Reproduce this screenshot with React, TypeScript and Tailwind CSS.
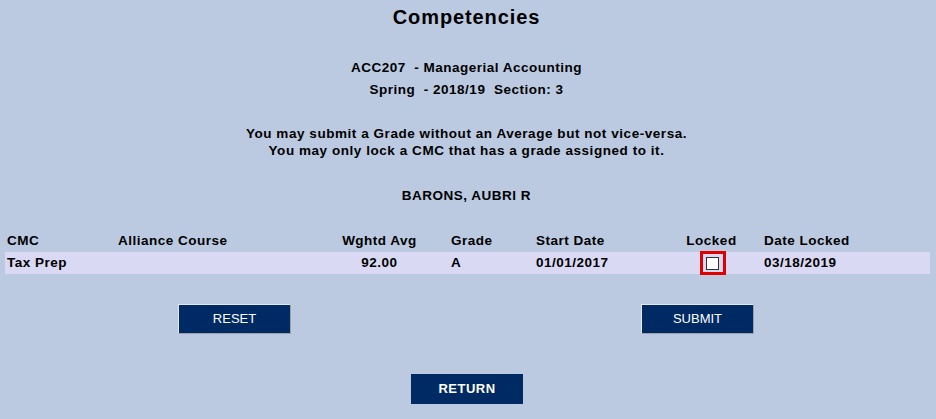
import React from "react";

export default function App() {
  const font = { fontFamily: '"Liberation Sans", Arial, sans-serif' };
  return (
    <div className="min-h-[419px] w-full bg-[#bbcae1] text-black" style={font}>
      <div className="w-[933px]">
        <div className="pt-[5px] text-center text-[20px] font-bold leading-[24px] tracking-[0.9px]">Competencies</div>
        <div className="mt-[28px] text-center text-[13.5px] font-bold leading-[22px] tracking-[0.5px]">
          <div className="whitespace-pre">ACC207  - Managerial Accounting</div>
          <div className="whitespace-pre">Spring  - 2018/19  Section: 3</div>
        </div>
        <div className="mt-[24px] text-center text-[13.5px] font-bold leading-[17px] tracking-[0.55px]">
          <div>You may submit a Grade without an Average but not vice-versa.</div>
          <div>You may only lock a CMC that has a grade assigned to it.</div>
        </div>
        <div className="mt-[28px] text-center text-[13.5px] font-bold leading-[17px] tracking-[0.5px]">BARONS, AUBRI R</div>

        <div className="mt-[26px] ml-[5px] w-[925px] text-[13.5px] font-bold tracking-[0.5px]">
          <div className="flex h-[22px] items-center">
            <div className="w-[111px] pl-[2px]">CMC</div>
            <div className="w-[214px] pl-[2px]">Alliance Course</div>
            <div className="w-[99px] text-center">Wghtd Avg</div>
            <div className="w-[105px] pl-[22px]">Grade</div>
            <div className="w-[127px] pl-[2px]">Start Date</div>
            <div className="w-[101px] text-center">Locked</div>
            <div className="flex-1 pl-[2px]">Date Locked</div>
          </div>
          <div className="flex h-[22px] items-center bg-[#d9d9f4]">
            <div className="w-[111px] pl-[2px]">Tax Prep</div>
            <div className="w-[214px] pl-[2px]"></div>
            <div className="w-[99px] text-center">92.00</div>
            <div className="w-[105px] pl-[22px]">A</div>
            <div className="w-[127px] pl-[2px]">01/01/2017</div>
            <div className="flex w-[101px] justify-center">
              <div className="ml-[2px] flex h-[24px] w-[26px] items-center justify-center border-[3px] border-[#e00000]">
                <div className="h-[13px] w-[13px] border border-[#333333] bg-white"></div>
              </div>
            </div>
            <div className="flex-1 pl-[2px]">03/18/2019</div>
          </div>
        </div>

        <div className="mt-[30px] flex">
          <button className="ml-[178px] h-[30px] w-[113px] border border-t-[#e8e8e8] border-l-[#e8e8e8] border-b-[#a0a0a0] border-r-[#a0a0a0] bg-[#002a64] text-[13px] text-white">
            RESET
          </button>
          <button className="ml-[350px] h-[30px] w-[113px] border border-t-[#e8e8e8] border-l-[#e8e8e8] border-b-[#a0a0a0] border-r-[#a0a0a0] bg-[#002a64] text-[13px] text-white">
            SUBMIT
          </button>
        </div>

        <div className="mt-[40px] flex">
          <button className="ml-[411px] h-[30px] w-[112px] bg-[#002a64] text-[13px] font-bold tracking-[0.5px] text-white">
            RETURN
          </button>
        </div>
      </div>
    </div>
  );
}
